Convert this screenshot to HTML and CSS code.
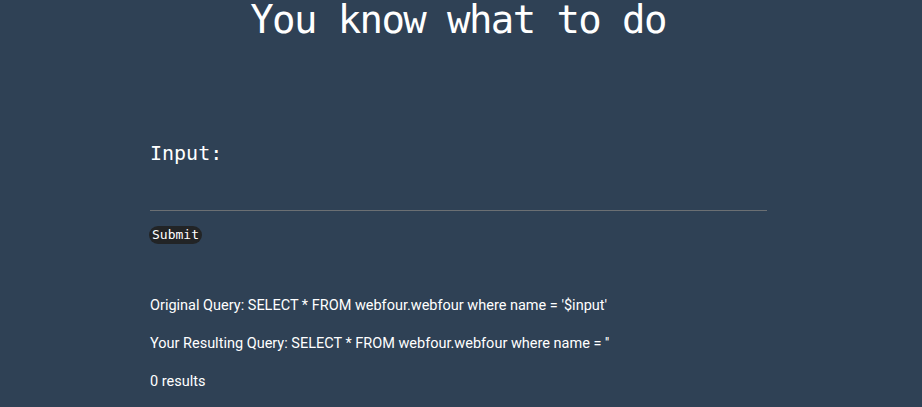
FILE: index.html
```html
<!DOCTYPE html>
<html>
<head>
<meta charset="utf-8">
<link rel="stylesheet" href="styles.css">
</head>
<body>
<h1 class="title">You know what to do</h1>
<main class="content">
  <form class="form">
    <label class="label" for="q">Input:</label>
    <input class="field" id="q" type="text">
    <button class="submit" type="button">Submit</button>
  </form>
  <p class="line">Original Query: SELECT * FROM webfour.webfour where name = '$input'</p>
  <p class="line">Your Resulting Query: SELECT * FROM webfour.webfour where name = ''</p>
  <p class="line">0 results</p>
</main>
</body>
</html>
```
FILE: styles.css
```css
html, body {
  margin: 0;
  padding: 0;
  background: #2f4155;
  color: #ffffff;
}
body {
  font-family: Roboto, "Liberation Sans", sans-serif;
}
.title {
  margin: 0;
  padding-right: 6px;
  text-align: center;
  font-family: "DejaVu Sans Mono", monospace;
  font-weight: normal;
  font-size: 39px;
  letter-spacing: -1.6px;
  line-height: 40px;
}
.content {
  width: 617px;
  margin: 0 0 0 150px;
  padding-top: 100px;
}
.form {
  display: flex;
  flex-direction: column;
  align-items: flex-start;
}
.label {
  font-family: "DejaVu Sans Mono", monospace;
  font-size: 20px;
  line-height: 26px;
}
.field {
  width: 100%;
  box-sizing: border-box;
  height: 37px;
  margin-top: 8px;
  background: transparent;
  border: none;
  border-bottom: 1px solid #6b6f73;
  outline: none;
  color: #fff;
  padding: 0;
}
.submit {
  margin-top: 15px;
  margin-left: -1px;
  background: #222426;
  color: #fff;
  border: none;
  border-radius: 9px;
  font-family: "DejaVu Sans Mono", monospace;
  font-size: 13px;
  line-height: 18px;
  padding: 0 3px;
}
.line {
  margin: 0;
  font-size: 14.5px;
  line-height: 38px;
}
.form + .line {
  margin-top: 43px;
}
```
